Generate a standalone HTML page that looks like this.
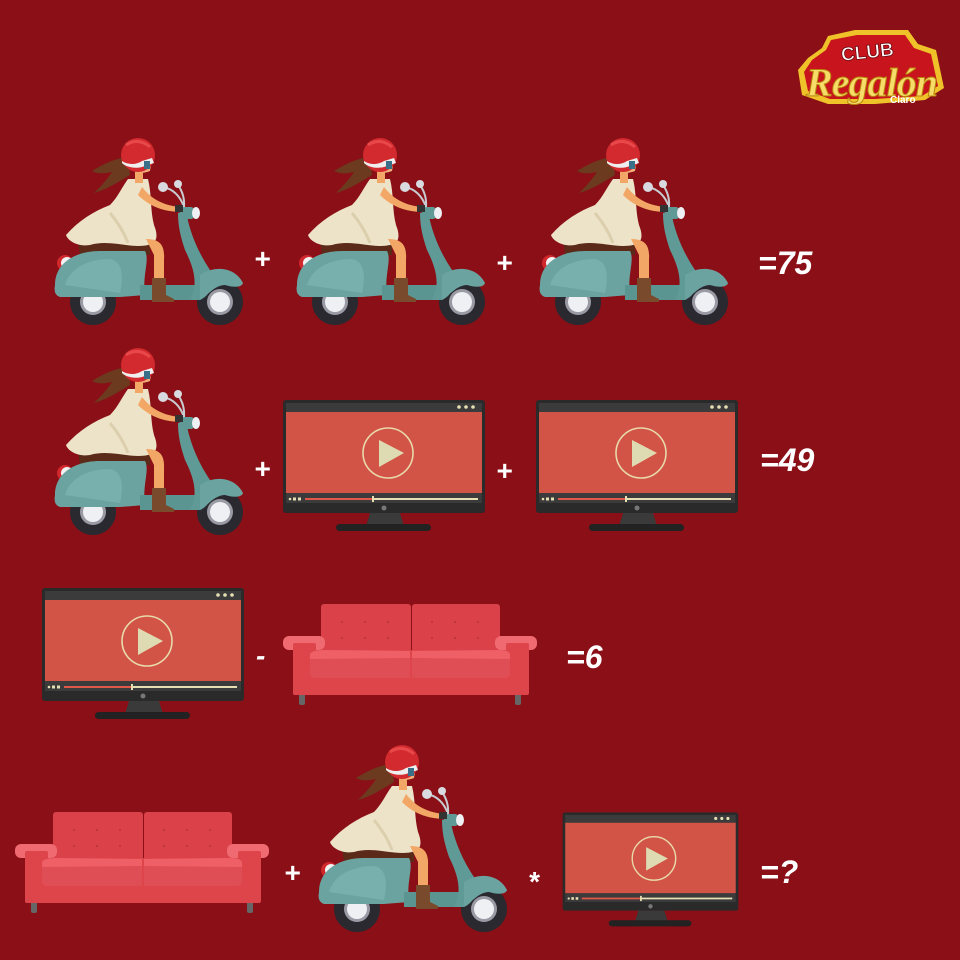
<!DOCTYPE html>
<html><head><meta charset="utf-8"><style>
html,body{margin:0;padding:0;background:#8a0f16;}
#c{position:relative;width:960px;height:960px;overflow:hidden;background:#8a0f16;font-family:"Liberation Sans",sans-serif;}
.t{position:absolute;color:#fff;font-weight:bold;font-style:italic;font-size:32px;line-height:32px;}
.p{font-size:28px;}
</style></head><body><div id="c">
<svg width="960" height="960" style="position:absolute;left:0;top:0">
<defs>
<g id="sc">
 <path d="M78,22 C62,24 52,30 42,36 C50,40 56,38 62,37 C56,46 50,52 44,58 C58,54 70,46 80,40 Z" fill="#6b3a1f"/>
 <circle cx="43" cy="167" r="23" fill="#2a2930"/><circle cx="43" cy="167" r="13" fill="#9a9aa5"/><circle cx="43" cy="167" r="10" fill="#eef0f3"/>
 <circle cx="170" cy="167" r="23" fill="#2a2930"/><circle cx="170" cy="167" r="13" fill="#9a9aa5"/><circle cx="170" cy="167" r="10" fill="#eef0f3"/>
 <circle cx="15" cy="128" r="8" fill="#d0282c"/><circle cx="17" cy="128" r="6" fill="#f2f2f2"/>
 <path d="M28,106 Q60,100 100,104 L100,120 L30,120 Z" fill="#5b2a18"/>
 <path d="M5,150 C5,128 25,116 50,116 L95,116 C100,125 92,140 95,160 L70,162 L10,162 Q3,160 5,150 Z" fill="#6aa3a0"/>
 <path d="M15,150 C20,132 40,124 60,124 C72,126 74,140 70,158 Z" fill="#78b0ad"/>
 <path d="M90,150 L150,150 L150,165 L90,165 Z" fill="#5a9592"/>
 <path d="M128,78 L136,76 C140,100 150,120 160,135 C165,145 162,160 150,165 L140,165 C148,150 145,135 135,115 C130,100 128,90 128,78 Z" fill="#5f9a97"/>
 <path d="M150,140 C165,130 185,132 193,148 C192,152 185,153 175,150 C165,150 158,160 150,165 Z" fill="#6aa3a0"/>
 <rect x="130" y="72" width="14" height="12" rx="3" fill="#5f9a97"/>
 <ellipse cx="146" cy="78" rx="4" ry="6" fill="#eef0f3"/>
 <path d="M113,52 Q128,55 134,72" stroke="#c8cbd0" stroke-width="2" fill="none"/>
 <path d="M128,50 Q135,60 134,72" stroke="#c8cbd0" stroke-width="2" fill="none"/>
 <circle cx="113" cy="52" r="5" fill="#d8dadf"/><circle cx="128" cy="49" r="4" fill="#d8dadf"/>
 <path d="M78,44 L98,44 C102,60 100,75 104,90 C108,100 108,108 98,110 C80,114 60,104 40,110 C28,112 18,106 16,100 C28,86 44,76 60,70 C68,62 72,52 78,44 Z" fill="#ede3c8"/>
 <path d="M60,78 C70,90 75,100 78,108" stroke="#dccfae" stroke-width="3" fill="none"/>
 <path d="M92,52 C100,62 110,70 130,72 L132,77 C112,77 98,70 88,60 Z" fill="#f2a766"/>
 <rect x="125" y="70" width="8" height="7" fill="#333"/>
 <path d="M96,104 C110,104 115,110 114,125 L114,145 L104,145 L104,120 Z" fill="#f2a766"/>
 <path d="M102,143 L116,143 L116,160 L124,164 L124,167 L102,167 Z" fill="#7a4a2c"/>
 <rect x="85" y="34" width="8" height="14" fill="#f2a766"/>
 <path d="M82,22 C82,38 90,40 100,36 L102,24 Z" fill="#f4b07a"/>
 <circle cx="88" cy="20" r="17" fill="#d22a2e"/>
 <path d="M76,10 Q88,2 100,12" stroke="#e9484b" stroke-width="3" fill="none"/>
 <path d="M72,26 C78,30 86,30 92,26 L102,23 L104,28 L92,32 C84,34 76,32 72,28 Z" fill="#eeeeee"/>
 <rect x="94" y="26" width="6" height="8" fill="#3a6f8a"/>
</g>
<g id="tv">
 <rect x="3" y="5" width="202" height="113" rx="3" fill="#2a2a2a"/>
 <rect x="6" y="8" width="196" height="10" fill="#3b3b3b"/>
 <circle cx="179" cy="12" r="1.8" fill="#e6dfb3"/><circle cx="186" cy="12" r="1.8" fill="#e6dfb3"/><circle cx="193" cy="12" r="1.8" fill="#e6dfb3"/>
 <rect x="6" y="17" width="196" height="81" fill="#d25446"/>
 <rect x="6" y="98" width="196" height="10" fill="#3b3b3b"/>
 <circle cx="10" cy="104" r="1.3" fill="#e6dfb3"/><rect x="13" y="102.5" width="3" height="3" fill="#e6dfb3"/><rect x="18" y="102.5" width="3" height="3" fill="#e6dfb3"/>
 <rect x="25" y="103" width="68" height="2" fill="#e0584a"/><rect x="93" y="103" width="105" height="2" fill="#e6dfb3"/><rect x="92" y="101" width="2" height="6" fill="#e6dfb3"/>
 <circle cx="104" cy="113" r="2.5" fill="#777"/>
 <circle cx="108" cy="58" r="25" fill="none" stroke="#e8d9aa" stroke-width="1.6"/>
 <path d="M99,45 L124,58 L99,72 Z" fill="#dedbb2"/>
 <path d="M90,118 L120,118 L124,131 L86,131 Z" fill="#3a3a3a"/>
 <rect x="56" y="129" width="95" height="7" rx="3.5" fill="#222"/>
</g>
<g id="sofa">
 <rect x="19" y="98" width="6" height="12" rx="2" fill="#666"/><rect x="235" y="98" width="6" height="12" rx="2" fill="#666"/>
 <rect x="41" y="9" width="90" height="70" rx="3" fill="#db4148"/><rect x="132" y="9" width="88" height="70" rx="3" fill="#db4148"/>
 <g fill="#b9333a"><circle cx="62" cy="27" r="1"/><circle cx="85" cy="27" r="1"/><circle cx="108" cy="27" r="1"/><circle cx="62" cy="43" r="1"/><circle cx="85" cy="43" r="1"/><circle cx="108" cy="43" r="1"/><circle cx="152" cy="27" r="1"/><circle cx="175" cy="27" r="1"/><circle cx="198" cy="27" r="1"/><circle cx="152" cy="43" r="1"/><circle cx="175" cy="43" r="1"/><circle cx="198" cy="43" r="1"/></g>
 <rect x="13" y="55" width="235" height="45" rx="2" fill="#de454b"/>
 <rect x="3" y="41" width="42" height="14" rx="6" fill="#ef6a71"/><rect x="215" y="41" width="42" height="14" rx="6" fill="#ef6a71"/>
 <rect x="13" y="48" width="23" height="52" rx="2" fill="#de454b"/><rect x="226" y="48" width="23" height="52" rx="2" fill="#de454b"/>
 <path d="M30,60 Q30,55 45,55 L130,56 L130,83 L36,83 Q30,83 30,78 Z" fill="#e04e55"/>
 <path d="M30,60 Q30,55 45,55 L130,56 L130,63 L30,64 Z" fill="#ee5f66"/>
 <path d="M132,56 L218,55 Q230,55 230,60 L230,78 Q230,83 224,83 L132,83 Z" fill="#e04e55"/>
 <path d="M132,56 L218,55 Q230,55 230,60 L230,64 L132,63 Z" fill="#ee5f66"/>
</g>
</defs>
<use href="#sc" x="50" y="135"/><use href="#sc" x="292" y="135"/><use href="#sc" x="535" y="135"/>
<use href="#sc" x="50" y="345"/>
<use href="#tv" x="280" y="395"/><use href="#tv" x="533" y="395"/>
<use href="#tv" x="39" y="583"/>
<use href="#sofa" x="280" y="595"/>
<use href="#sofa" x="12" y="803"/>
<use href="#sc" x="314" y="742"/>
<use href="#tv" transform="translate(560,808) scale(0.87)"/>
<path d="M808,58 L822,48 L828,36 L855,30 L908,30 L918,44 L936,50 L944,88 L925,100 L875,104 L828,104 L802,95 L798,70 Z" fill="#f0c22a"/>
<path d="M812,60 L826,50 L831,40 L857,35 L905,35 L914,48 L931,54 L938,86 L922,96 L875,99 L830,99 L808,91 L804,72 Z" fill="#c8141c"/>
<text x="841" y="58" font-family="Liberation Sans" font-weight="bold" font-size="19" fill="#fff" stroke="#6a0a10" stroke-width="0.8" transform="rotate(-6 870 52)">CLUB</text>
<text x="806" y="96" font-family="Liberation Serif" font-style="italic" font-weight="bold" font-size="40" fill="#f7dc6a" stroke="#b8860b" stroke-width="1" textLength="132">Regalón</text>
<text x="890" y="103" font-family="Liberation Sans" font-weight="bold" font-size="10" fill="#fff">Claro</text>
</svg>
<div class="t p" style="left:254px;top:243px">+</div>
<div class="t p" style="left:496px;top:247px">+</div>
<div class="t p" style="left:254px;top:453px">+</div>
<div class="t p" style="left:496px;top:455px">+</div>
<div class="t p" style="left:256px;top:640px">-</div>
<div class="t p" style="left:284px;top:857px">+</div>
<div class="t p" style="left:528px;top:866px">*</div>
<div class="t" style="left:758px;top:247px">=75</div>
<div class="t" style="left:760px;top:444px">=49</div>
<div class="t" style="left:566px;top:641px">=6</div>
<div class="t" style="left:760px;top:856px">=?</div>
</div></body></html>
